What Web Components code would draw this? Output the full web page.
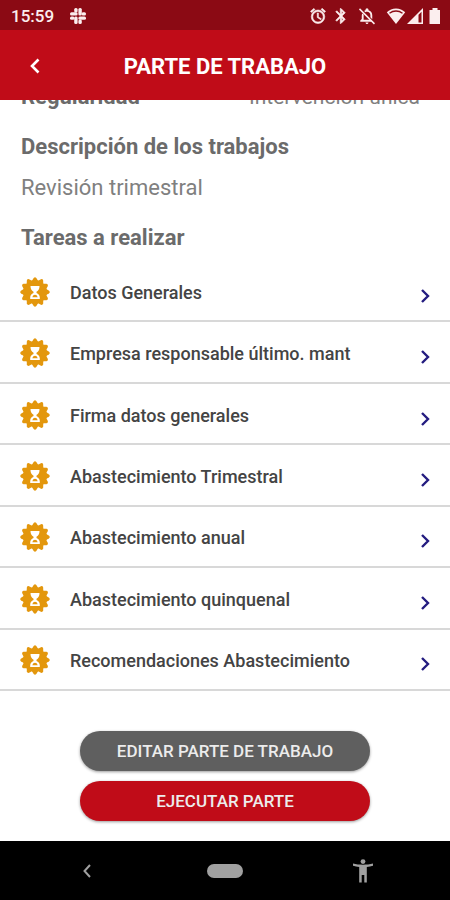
<!DOCTYPE html>
<html lang="es">
<head>
<meta charset="utf-8">
<meta name="viewport" content="width=device-width, initial-scale=1">
<title>Parte de trabajo</title>
<style>
    body{
        margin: 0;
        background: #fff;
        font-family: Roboto, "Liberation Sans", sans-serif;
    }
</style>
</head>
<body>
<work-order-page>
    <status-bar slot="top" time="15:59"></status-bar>
    <title-bar slot="top">PARTE DE TRABAJO</title-bar>
    <detail-info>
        <span slot="label">Regularidad</span>
        <span slot="value">Intervención única</span>
        <span slot="title">Descripción de los trabajos</span>
        <span slot="text">Revisión trimestral</span>
        <span slot="tasks">Tareas a realizar</span>
    </detail-info>
    <task-list>
        <task-item>Datos Generales</task-item>
        <task-item>Empresa responsable último. mant</task-item>
        <task-item>Firma datos generales</task-item>
        <task-item>Abastecimiento Trimestral</task-item>
        <task-item>Abastecimiento anual</task-item>
        <task-item>Abastecimiento quinquenal</task-item>
        <task-item>Recomendaciones Abastecimiento</task-item>
    </task-list>
    <action-group>
        <pill-button>EDITAR PARTE DE TRABAJO</pill-button>
        <pill-button class="primary">EJECUTAR PARTE</pill-button>
    </action-group>
    <system-nav slot="bottom"></system-nav>
</work-order-page>

<script>
class WorkOrderPage extends HTMLElement{
    constructor(){
        super();
        this.shadow = this.attachShadow({mode: 'open'});
    }

    connectedCallback() {
        this.render();
    }

    render(){
        this.shadow.innerHTML =
        `
        <style>
            :host{
                display: flex;
                flex-direction: column;
                min-height: 100vh;
            }
            main{
                display: flex;
                flex: 1;
                flex-direction: column;
                overflow: hidden;
            }
        </style>
        <slot name="top"></slot>
        <main><slot></slot></main>
        <slot name="bottom"></slot>
        `;
    }
}
customElements.define('work-order-page', WorkOrderPage);

class StatusBar extends HTMLElement{
    constructor(){
        super();
        this.shadow = this.attachShadow({mode: 'open'});
    }

    connectedCallback() {
        this.render();
    }

    render(){
        this.shadow.innerHTML =
        `
        <style>
            :host{
                display: flex;
                align-items: center;
                box-sizing: border-box;
                height: 30px;
                padding: 2px 6px 0 11px;
                background: #8b0a14;
                color: #fbeeee;
                font-size: 17px;
                font-weight: 500;
            }
            svg{
                display: block;
                fill: currentColor;
            }
            .slack{
                margin-left: 15px;
            }
            .icons{
                display: flex;
                align-items: center;
                margin-left: auto;
            }
            .bell{
                margin: 0 10px 0 8px;
            }
            .bluetooth{
                margin-left: 5px;
            }
        </style>
        <time>${this.getAttribute('time')}</time>
        <svg class="slack" width="18" height="18" viewBox="0 0 18 18">
            <rect x="5.200" y="1" width="3.400" height="4.500" rx="1.500"/>
            <rect x="9.400" y="1" width="3.400" height="7.600" rx="1.500"/>
            <rect x="12.500" y="5.200" width="4.500" height="3.400" rx="1.500"/>
            <rect x="9.400" y="9.400" width="7.600" height="3.400" rx="1.500"/>
            <rect x="9.400" y="12.500" width="3.400" height="4.500" rx="1.500"/>
            <rect x="5.200" y="9.400" width="3.400" height="7.600" rx="1.500"/>
            <rect x="1" y="9.400" width="4.500" height="3.400" rx="1.500"/>
            <rect x="1" y="5.200" width="7.600" height="3.400" rx="1.500"/>
        </svg>
        <div class="icons">
            <svg width="18" height="18" viewBox="0 0 24 24"><path d="M22 5.700l-4.600-3.900-1.300 1.500 4.600 3.900L22 5.700zM7.900 3.400L6.600 1.900 2 5.700l1.300 1.500 4.600-3.800zM12.500 8H11v6l4.700 2.900.8-1.200-4-2.400V8zM12 4a9 9 0 1 0 0 18 9 9 0 0 0 0-18zm0 16a7 7 0 1 1 0-14 7 7 0 0 1 0 14z" stroke="currentColor" stroke-width=".8"/></svg>
            <svg class="bluetooth" width="18" height="18" viewBox="0 0 24 24"><path d="M17.700 7.700L12 2h-1v7.600L6.400 5 5 6.400l5.600 5.600L5 17.600 6.400 19l4.600-4.600V22h1l5.700-5.700-4.300-4.300 4.300-4.300zM13 5.800l1.900 1.900L13 9.600V5.800zm1.900 10.500L13 18.200v-3.800l1.900 1.900z" stroke="currentColor" stroke-width=".8"/></svg>
            <svg class="bell" width="18" height="18" viewBox="0 0 24 24"><path d="M12 22.500c1.100 0 2-.9 2-2h-4c0 1.100.9 2 2 2zM5.800 8.600C5.300 9.500 5 10.300 5 11.500V16l-2 2v1.500h15.500l-2-2.500H7.500v-5.500c0-.5.100-.9.300-1.300zM16.500 11v2.800l2.500 2.500V11c0-3.300-1.800-5.900-5-6.600V3.500a2 2 0 0 0-4 0v.9c-.7.200-1.300.4-1.800.8l1.700 1.800c.6-.4 1.300-.6 2.100-.6 2.700 0 4.500 2 4.500 4.600z"/><path d="M2 2.500L22 22.500" fill="none" stroke="currentColor" stroke-width="2"/></svg>
            <svg width="20" height="18" viewBox="0 0 20 18"><path d="M10 17L.8 5.200C3.300 3 6.500 1.500 10 1.500s6.700 1.500 9.200 3.700z"/><path d="M3.500 6.300C5.300 4.900 7.600 4 10 4s4.700.9 6.500 2.300" fill="none" stroke="#8b0a14" stroke-width="1.300"/></svg>
            <svg width="18" height="18" viewBox="0 0 18 18"><path d="M17 1v16H1zM15.500 4.800l-3 3v7.700h3z" fill-rule="evenodd"/></svg>
            <svg width="20" height="18" viewBox="0 0 20 18"><path d="M8.500 1h5v2h2.500v14h-10.500V3h3z"/></svg>
        </div>
        `;
    }
}
customElements.define('status-bar', StatusBar);

class TitleBar extends HTMLElement{
    constructor(){
        super();
        this.shadow = this.attachShadow({mode: 'open'});
    }

    connectedCallback() {
        this.render();
    }

    render(){
        this.shadow.innerHTML =
        `
        <style>
            :host{
                display: grid;
                grid-template-columns: 70px 1fr 70px;
                align-items: center;
                height: 70px;
                background: #c00c18;
                color: #fff;
            }
            button{
                display: grid;
                place-items: center;
                height: 70px;
                padding: 2px 0 0;
                border: 0;
                background: none;
                color: inherit;
            }
            h1{
                margin: 4px 0 0;
                font-size: 22px;
                font-weight: 700;
                line-height: 28px;
                text-align: center;
                white-space: nowrap;
            }
        </style>
        <button type="button" aria-label="Volver">
            <svg width="12" height="16" viewBox="0 0 12 16"><path d="M9.500 1.500L3 8l6.500 6.500" fill="none" stroke="currentColor" stroke-width="2.600"/></svg>
        </button>
        <h1><slot></slot></h1>
        `;
    }
}
customElements.define('title-bar', TitleBar);

class DetailInfo extends HTMLElement{
    constructor(){
        super();
        this.shadow = this.attachShadow({mode: 'open'});
    }

    connectedCallback() {
        this.render();
    }

    render(){
        // the first row is scrolled half way under the title bar
        this.shadow.innerHTML =
        `
        <style>
            :host{
                display: block;
                margin-top: -17px;
                padding: 0 30px 9px 21px;
                color: #6b6b6b;
                font-size: 22px;
                line-height: 28px;
            }
            .row{
                display: flex;
                justify-content: space-between;
            }
            h2, .row slot[name="label"]{
                font-weight: 700;
            }
            h2{
                margin: 22px 0 0;
                font-size: inherit;
            }
            p{
                margin: 13px 0 0;
            }
            p, .value{
                color: #808080;
                font-weight: 400;
            }
            .value{
                font-size: 21px;
            }
        </style>
        <div class="row">
            <slot name="label"></slot>
            <div class="value"><slot name="value"></slot></div>
        </div>
        <h2><slot name="title"></slot></h2>
        <p><slot name="text"></slot></p>
        <h2><slot name="tasks"></slot></h2>
        `;
    }
}
customElements.define('detail-info', DetailInfo);

class TaskList extends HTMLElement{
    constructor(){
        super();
        this.shadow = this.attachShadow({mode: 'open'});
    }

    connectedCallback() {
        this.setAttribute('role', 'list');
        this.render();
    }

    render(){
        this.shadow.innerHTML =
        `
        <style>
            :host{
                display: grid;
                flex: 1;
                grid-auto-rows: 1fr;
            }
        </style>
        <slot></slot>
        `;
    }
}
customElements.define('task-list', TaskList);

class TaskItem extends HTMLElement{
    constructor(){
        super();
        this.shadow = this.attachShadow({mode: 'open'});
    }

    connectedCallback() {
        this.setAttribute('role', 'listitem');
        this.render();
    }

    // twelve rounded teeth around the badge
    teeth(){
        let teeth = '';
        for(let i = 0; i < 12; i++){
            teeth += `<path d="M11.200 5L13.700 .9q1.300-1.300 2.600 0L18.800 5z" transform="rotate(${i * 30} 15 15)"/>`;
        }
        return teeth;
    }

    render(){
        this.shadow.innerHTML =
        `
        <style>
            :host{
                display: grid;
                min-height: 56px;
                border-bottom: 2px solid #d8d8d8;
            }
            a{
                display: flex;
                align-items: center;
                gap: 20px;
                padding: 0 18px 0 20px;
                color: #444;
                font-size: 18px;
                font-weight: 500;
                line-height: 24px;
                text-decoration: none;
            }
            span{
                flex: 1;
                padding-top: 4px;
            }
            .badge{
                padding-top: 2px;
            }
            .arrow{
                padding-top: 10px;
            }
        </style>
        <a href="#">
            <svg class="badge" width="30" height="30" viewBox="0 0 30 30">
                <g fill="#e3970d">
                    <circle cx="15" cy="15" r="11.800"/>
                    ${this.teeth()}
                </g>
                <path d="M10.500 9h9c0 3-1 4.300-3 5.800v1.200c2 1 3.300 2.400 3.300 4.500v1.500h-9.600v-1.500c0-2.100 1.300-3.500 3.300-4.500v-1.200c-2-1.500-3-2.800-3-5.800z" fill="#fff"/>
                <path d="M12.300 20.300c.5-1.700 1.500-2.500 2.700-2.500s2.200.8 2.700 2.500z" fill="#e3970d"/>
            </svg>
            <span><slot></slot></span>
            <svg class="arrow" width="12" height="16" viewBox="0 0 12 16"><path d="M2 2l6 6-6 6" fill="none" stroke="#241c80" stroke-width="2.400"/></svg>
        </a>
        `;
    }
}
customElements.define('task-item', TaskItem);

class ActionGroup extends HTMLElement{
    constructor(){
        super();
        this.shadow = this.attachShadow({mode: 'open'});
    }

    connectedCallback() {
        this.render();
    }

    render(){
        this.shadow.innerHTML =
        `
        <style>
            :host{
                display: grid;
                gap: 10px;
                padding: 40px 80px 20px;
            }
        </style>
        <slot></slot>
        `;
    }
}
customElements.define('action-group', ActionGroup);

class PillButton extends HTMLElement{
    constructor(){
        super();
        this.shadow = this.attachShadow({mode: 'open'});
    }

    connectedCallback() {
        this.render();
    }

    render(){
        this.shadow.innerHTML =
        `
        <style>
            :host{
                display: block;
                --fill: #5f5f5f;
            }
            :host(.primary){
                --fill: #c00c18;
            }
            button{
                display: block;
                width: 100%;
                height: 40px;
                padding: 0;
                border: 0;
                border-radius: 20px;
                background: var(--fill);
                box-shadow: 0 1px 3px rgba(0, 0, 0, .4);
                color: #ececec;
                font-family: inherit;
                font-size: 17px;
                font-weight: 500;
                white-space: nowrap;
            }
        </style>
        <button type="button"><slot></slot></button>
        `;
    }
}
customElements.define('pill-button', PillButton);

class SystemNav extends HTMLElement{
    constructor(){
        super();
        this.shadow = this.attachShadow({mode: 'open'});
    }

    connectedCallback() {
        this.render();
    }

    render(){
        this.shadow.innerHTML =
        `
        <style>
            :host{
                display: flex;
                align-items: center;
                justify-content: space-between;
                height: 59px;
                padding: 0 74px;
                background: #000;
                color: #a0a0a0;
            }
            button{
                display: grid;
                place-items: center;
                width: 26px;
                height: 48px;
                padding: 0;
                border: 0;
                background: none;
                color: inherit;
            }
            .home{
                width: 36px;
            }
        </style>
        <button type="button" aria-label="Atrás">
            <svg width="10" height="14" viewBox="0 0 10 14"><path d="M8 1L2.500 7 8 13" fill="none" stroke="currentColor" stroke-width="2"/></svg>
        </button>
        <button class="home" type="button" aria-label="Inicio">
            <svg width="36" height="14" viewBox="0 0 36 14"><rect width="36" height="14" rx="7" fill="currentColor"/></svg>
        </button>
        <button type="button" aria-label="Accesibilidad">
            <svg width="20" height="24" viewBox="0 0 20 24" fill="currentColor"><circle cx="10" cy="2.600" r="2.400"/><path d="M0 4.500c3 .8 6.500 1.200 10 1.200s7-.4 10-1.200l.3 2.200c-2 .6-4.300 1-6.500 1.200V23.500h-2.500V16h-2.600v7.500H6.200V7.900C4 7.700 1.700 7.300-.3 6.700z"/></svg>
        </button>
        `;
    }
}
customElements.define('system-nav', SystemNav);
</script>
</body>
</html>
